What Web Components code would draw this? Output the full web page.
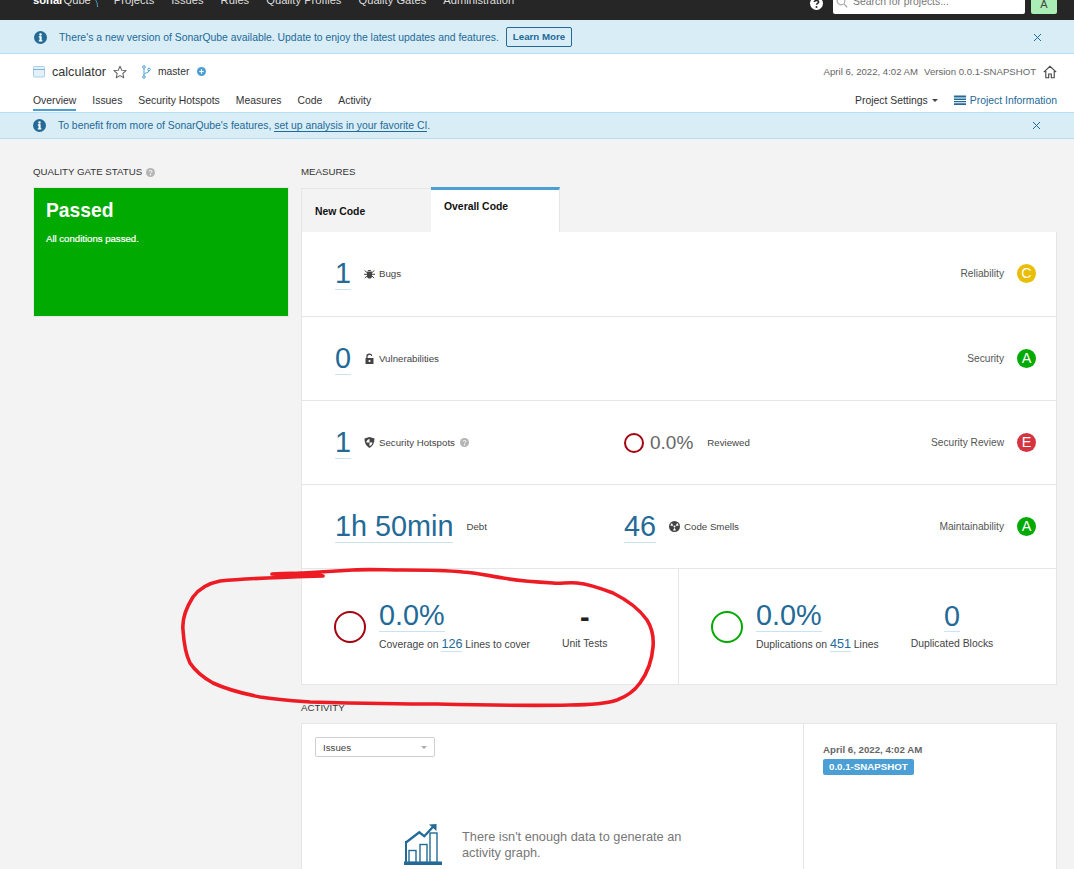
<!DOCTYPE html>
<html lang="en">
<head>
<meta charset="utf-8">
<title>calculator - SonarQube</title>
<style>
  html, body { margin: 0; height: 869px; overflow: hidden; }
  body { background: #f3f3f3; font-family: "Liberation Sans", Arial, sans-serif; color: #333; }
</style>
</head>
<body>
<sq-app></sq-app>

<script>
const ICONS = {
  info: '<svg width="13" height="13" viewBox="0 0 16 16"><circle cx="8" cy="8" r="8" fill="#236a97"/><rect x="6.8" y="6.6" width="2.6" height="6" fill="#fff"/><rect x="5.8" y="6.6" width="3" height="1.3" fill="#fff"/><rect x="5.8" y="11.4" width="4.6" height="1.4" fill="#fff"/><circle cx="8" cy="4.2" r="1.5" fill="#fff"/></svg>',
  close: '<svg width="9" height="9" viewBox="0 0 9 9"><path d="M1 1l7 7M8 1L1 8" stroke="#236a97" stroke-width="1" fill="none"/></svg>',
  project: '<svg width="12" height="13" viewBox="0 0 12 13"><rect x=".5" y="1.5" width="11" height="10.5" rx="1" fill="#e4f0f8" stroke="#a9cfe6"/><path d="M.5 4.5h11" stroke="#7db5d8"/></svg>',
  star: '<svg width="14" height="14" viewBox="0 0 16 16"><path d="M8 1.4l2 4.5 4.9.5-3.7 3.3 1.1 4.8L8 12.1l-4.3 2.4 1.1-4.8L1.100 6.400l4.900-.5z" fill="none" stroke="#666" stroke-width="1.200" stroke-linejoin="round"/></svg>',
  branch: '<svg width="9" height="14" viewBox="0 0 9 14"><g fill="none" stroke="#4b9fd5" stroke-width="1"><circle cx="2" cy="2" r="1.300"/><circle cx="2" cy="12" r="1.300"/><circle cx="7" cy="4.500" r="1.300"/><path d="M2 3.300v7.400M7 5.800C7 8 2.500 7.500 2 9.500"/></g></svg>',
  plus: '<svg width="9" height="9" viewBox="0 0 9 9"><circle cx="4.500" cy="4.500" r="4.500" fill="#4b9fd5"/><path d="M2.300 4.500h4.400M4.500 2.300v4.400" stroke="#fff" stroke-width="1.200"/></svg>',
  home: '<svg width="14" height="14" viewBox="0 0 14 14"><path d="M.8 7.200L7 1.300l6.200 5.900M2.800 6v6.800h2.900V9h2.600v3.800h2.900V6" fill="none" stroke="#444" stroke-width="1.100"/></svg>',
  list: '<svg width="12" height="10" viewBox="0 0 12 10"><path d="M0 .5h12v2H0zM0 3.500h12v1.400H0zM0 5.900h12v1.400H0zM0 8.300h12V10H0z" fill="#236a97"/></svg>',
  help: '<svg width="9" height="9" viewBox="0 0 9 9"><circle cx="4.500" cy="4.500" r="4.500" fill="#b4b4b4"/><path d="M3 3.500C3 2.100 6 2.100 6 3.500 6 4.500 4.500 4.400 4.500 5.400" fill="none" stroke="#fff" stroke-width="1"/><circle cx="4.500" cy="6.800" r=".7" fill="#fff"/></svg>',
  helpDark: '<svg width="13" height="13" viewBox="0 0 9 9"><circle cx="4.500" cy="4.500" r="4.500" fill="#fff"/><path d="M3 3.500C3 2.100 6 2.100 6 3.500 6 4.500 4.500 4.400 4.500 5.400" fill="none" stroke="#262626" stroke-width="1.100"/><circle cx="4.500" cy="7" r=".7" fill="#262626"/></svg>',
  search: '<svg width="12" height="12" viewBox="0 0 12 12"><circle cx="5" cy="5" r="3.800" fill="none" stroke="#aaa" stroke-width="1.200"/><path d="M8 8l3.200 3.200" stroke="#aaa" stroke-width="1.400"/></svg>',
  bug: '<svg width="11" height="11" viewBox="0 0 11 11"><path d="M3.500 3.200C3.500 1.500 7.500 1.500 7.500 3.200zM3 3.800h5v4.400c0 1.500-1.200 2.400-2.500 2.400S3 9.700 3 8.200z" fill="#444"/><path d="M.6 2.500l2.400 2M10.400 2.500L8 4.500M0 6.300h3M11 6.300H8M.8 10l2.400-2M10.200 10L7.800 8" stroke="#444" stroke-width="1" fill="none"/></svg>',
  lock: '<svg width="11" height="11" viewBox="0 0 11 11"><path d="M3 5V3.200C3 .8 7.200.5 7.800 2.800" fill="none" stroke="#444" stroke-width="1.300"/><path d="M1.500 5h8v6h-8z" fill="#444"/><circle cx="5.500" cy="8" r="1.100" fill="#fff"/></svg>',
  shield: '<svg width="11" height="11" viewBox="0 0 11 11"><path d="M5.500 0L10.500 1.600C10.500 6 9 9.300 5.500 11 2 9.300.5 6 .5 1.600z" fill="#444"/><path d="M5.500 1.800V5.500H2.300C2.600 3.800 3.500 2.500 5.500 1.800zM5.500 5.500h3c-.3 1.800-1.200 3-3 3.800z" fill="#fff"/></svg>',
  smell: '<svg width="11" height="11" viewBox="0 0 11 11"><circle cx="5.500" cy="5.500" r="5.500" fill="#444"/><circle cx="5.500" cy="5.500" r="1" fill="#fff"/><path transform="rotate(180 5.500 5.500)" d="M5.500 4.200L4 1.700a4.200 4.200 0 0 1 3 0zM4.300 6.200L1.400 6.300a4.200 4.200 0 0 0 1.500 2.600zM6.700 6.200l2.900.1a4.200 4.200 0 0 1-1.500 2.600z" fill="#fff"/></svg>',
  chart: '<svg width="38" height="42" viewBox="0 0 38 42"><g fill="none" stroke="#236a97"><path d="M2 17v22" stroke-width="2"/><rect x="5" y="26.500" width="7" height="12" stroke-width="1.400"/><rect x="16" y="20.500" width="7" height="18" stroke-width="1.400"/><rect x="26" y="9" width="7" height="29.500" stroke-width="1.400"/><path d="M1.300 19L15.300 8.300l5 4L30 1.800" stroke-width="2.300"/></g><path d="M25 .5L32.500 0v7z" fill="#236a97"/><rect y="37.500" width="38" height="3.500" fill="#236a97"/></svg>'
};

class SqNav extends HTMLElement {
  constructor() {
    super();
    this.attachShadow({ mode: 'open' });
    const items = ['Projects', 'Issues', 'Rules', 'Quality Profiles', 'Quality Gates', 'Administration'];
    this.shadowRoot.innerHTML = `
      <style>
        :host { display: flex; height: 20px; background: #262626; padding: 0 17px 0 33px; box-sizing: border-box; overflow: hidden; align-items: flex-end; }
        .logo { font-size: 11.200px; line-height: 14px; color: #fff; margin: 0 0 13px 0; white-space: nowrap; }
        .logo b { font-weight: 700; }
        .logo span { color: #ddd; font-weight: 400; }
        .wave { display: block; margin: 0 16px 13px 3px; }
        nav { display: flex; gap: 17px; margin-bottom: 13px; }
        nav a { font-size: 11.200px; line-height: 14px; color: #ddd; white-space: nowrap; }
        .right { margin-left: auto; display: flex; align-items: flex-end; padding-bottom: 6px; }
        .help { display: flex; margin: 0 10px 4px 0; }
        .search { width: 192px; height: 22px; background: #fff; border-radius: 2px; box-sizing: border-box; padding: 0 3px 3px; display: flex; align-items: center; gap: 5px; font-size: 10.400px; color: #777; }
        .avatar { width: 26px; height: 24px; margin-left: 6px; background: #aaeeb6; border-radius: 2px; display: flex; justify-content: center; align-items: flex-end; padding-bottom: 4px; box-sizing: border-box; font-size: 11px; color: #444; }
      </style>
      <div class="logo"><b>sonar</b><span>Qube</span></div>
      <svg class="wave" width="4" height="8" viewBox="0 0 4 8"><path d="M3.500 8C3.500 5 3 2 .5 0" fill="none" stroke="#4b9fd5" stroke-width="1"/></svg>
      <nav>${items.map(i => `<a>${i}</a>`).join('')}</nav>
      <div class="right">
        <span class="help">${ICONS.helpDark}</span>
        <div class="search">${ICONS.search}<span>Search for projects...</span></div>
        <div class="avatar">A</div>
      </div>`;
  }
}

class SqBanner extends HTMLElement {
  constructor() {
    super();
    this.attachShadow({ mode: 'open' });
    this.shadowRoot.innerHTML = `
      <style>
        :host { display: flex; align-items: center; background: #d9edf7; border-bottom: 1px solid #b4dff4; padding: 0 32px 0 34px; box-sizing: border-box; font-size: 10.400px; color: #236a97; }
        .msg { margin-left: var(--msg-gap, 12px); display: flex; align-items: center; gap: 7px; }
        svg { display: block; }
        .x { margin-left: auto; display: flex; }
        ::slotted(a) { color: #236a97; border-bottom: 1px solid #236a97; }
      </style>
      ${ICONS.info}
      <div class="msg"><span><slot></slot></span><slot name="action"></slot></div>
      <span class="x">${ICONS.close}</span>`;
  }
}

class SqProjectBar extends HTMLElement {
  constructor() {
    super();
    this.attachShadow({ mode: 'open' });
    const tabs = ['Overview', 'Issues', 'Security Hotspots', 'Measures', 'Code', 'Activity'];
    this.shadowRoot.innerHTML = `
      <style>
        :host { display: block; height: 59px; background: #fff; border-bottom: 1px solid #b4dff4; box-sizing: border-box; padding: 0 17px 0 33px; color: #333; }
        svg { display: block; }
        .top { display: flex; align-items: center; height: 35px; }
        .name { font-size: 12.600px; margin-left: 7px; color: #333; }
        .star { margin-left: 7px; }
        .branch { margin-left: 15px; }
        .master { font-size: 10.300px; margin-left: 7px; color: #333; }
        .plus { margin-left: 8px; }
        .meta { margin-left: auto; font-size: 9.600px; color: #666; display: flex; align-items: center; gap: 6px; }
        .home { margin-left: 1px; }
        .bottom { display: flex; height: 23px; align-items: flex-start; }
        .tab { font-size: 10.400px; line-height: 13px; padding: 5px 0 2px; margin-right: 16px; color: #333; }
        .tab.on { border-bottom: 2px solid #4b9fd5; }
        .side { margin-left: auto; display: flex; align-items: center; height: 22px; font-size: 10.400px; }
        .caret { width: 0; height: 0; border: 3px solid transparent; border-top: 3.500px solid #444; border-bottom: 0; margin-left: 4px; }
        .info { display: flex; align-items: center; gap: 4px; color: #236a97; margin-left: 16px; }
      </style>
      <div class="top">
        ${ICONS.project}
        <span class="name">calculator</span>
        <span class="star">${ICONS.star}</span>
        <span class="branch">${ICONS.branch}</span>
        <span class="master">master</span>
        <span class="plus">${ICONS.plus}</span>
        <div class="meta"><span>April 6, 2022, 4:02 AM</span><span>Version 0.0.1-SNAPSHOT</span><span class="home">${ICONS.home}</span></div>
      </div>
      <div class="bottom">
        ${tabs.map((t, i) => `<a class="tab ${i === 0 ? 'on' : ''}">${t}</a>`).join('')}
        <div class="side">
          <span>Project Settings</span><span class="caret"></span>
          <span class="info">${ICONS.list}<span>Project Information</span></span>
        </div>
      </div>`;
  }
}

class SqGate extends HTMLElement {
  constructor() {
    super();
    this.attachShadow({ mode: 'open' });
    this.shadowRoot.innerHTML = `
      <style>
        :host { display: block; height: 130px; box-sizing: border-box; background: #00aa00; border: 1px solid #e6e6e6; color: #fff; padding: 13px 12px; }
        h2 { margin: 0; font-size: 19.300px; line-height: 20px; font-weight: 700; }
        p { margin: 12px 0 0; font-size: 9.600px; line-height: 12px; -webkit-text-stroke: .2px #fff; }
      </style>
      <h2>Passed</h2>
      <p>All conditions passed.</p>`;
  }
}

class SqRating extends HTMLElement {
  constructor() {
    super();
    this.attachShadow({ mode: 'open' });
    const colors = { A: '#00aa00', C: '#eabe06', E: '#d4333f' };
    const v = this.getAttribute('value');
    this.shadowRoot.innerHTML = `
      <style>
        :host { display: flex; width: 19px; height: 19px; border-radius: 50%; background: ${colors[v]}; color: #fff; font-size: 14.400px; justify-content: center; align-items: center; line-height: 19px; }
      </style>${v}`;
  }
}

class SqRing extends HTMLElement {
  constructor() {
    super();
    this.attachShadow({ mode: 'open' });
    this.shadowRoot.innerHTML = `
      <style>
        :host { display: block; flex: none; width: var(--size, 32px); height: var(--size, 32px); border: var(--ring-w, 2px) solid var(--ring, #a4030f); border-radius: 50%; box-sizing: border-box; }
      </style>`;
  }
}

class SqRow extends HTMLElement {
  constructor() {
    super();
    this.attachShadow({ mode: 'open' });
    this.shadowRoot.innerHTML = `
      <style>
        :host { display: flex; height: 84px; box-sizing: border-box; border-bottom: 1px solid #e6e6e6; align-items: center; padding: 0 20px 0 33px; font-size: 10.200px; color: #555; }
        .a { flex: 0 0 289px; display: flex; align-items: center; }
        .b { display: flex; align-items: center; }
        .c { margin-left: auto; display: flex; align-items: center; gap: 13px; }
      </style>
      <div class="a"><slot name="a"></slot></div>
      <div class="b"><slot name="b"></slot></div>
      <div class="c"><slot name="c"></slot></div>`;
  }
}

class SqMetric extends HTMLElement {
  constructor() {
    super();
    this.attachShadow({ mode: 'open' });
    const icon = ICONS[this.getAttribute('icon')];
    this.shadowRoot.innerHTML = `
      <style>
        :host { display: flex; align-items: center; font-size: 9.700px; color: #444; }
        .v { font-size: 28.800px; line-height: 32px; color: #236a97; border-bottom: 1px solid #cae3f2; }
        .l { display: flex; align-items: center; gap: 4px; margin-left: 13px; white-space: nowrap; }
        svg { display: block; }
      </style>
      <span class="v">${this.getAttribute('value')}</span>
      <span class="l">${icon || ''}<span><slot></slot></span></span>`;
  }
}

class SqMeasures extends HTMLElement {
  constructor() {
    super();
    this.attachShadow({ mode: 'open' });
    this.shadowRoot.innerHTML = `
      <style>
        :host { display: block; }
        .tabs { display: flex; height: 44px; }
        .tab { box-sizing: border-box; font-size: 10.400px; font-weight: 700; color: #111; }
        .new { width: 130px; background: #f3f3f3; border: 1px solid #e6e6e6; border-bottom: 0; border-right: 0; padding: 17px 0 0 13px; }
        .over { width: 129px; background: #fff; border-top: 3px solid #4b9fd5; border-right: 1px solid #e6e6e6; padding: 11px 0 0 13px; margin-top: -1px; height: 45px; }
        .card { background: #fff; border: 1px solid #e6e6e6; border-top: 0; }
        .bottom { display: flex; height: 115px; }
        .cell { display: flex; align-items: center; padding-left: 32px; font-size: 10.400px; color: #444; box-sizing: border-box; }
        .cell:first-child { flex: 0 0 376px; }
        .cell + .cell { flex: 1; border-left: 1px solid #e6e6e6; }
        .main { margin-left: 13px; padding-bottom: 2px; }
        .big { display: inline-block; font-size: 28.800px; line-height: 32px; color: #236a97; border-bottom: 1px solid #cae3f2; }
        .sub { margin-top: 4px; line-height: 16px; white-space: nowrap; }
        .n { font-size: 12.600px; color: #236a97; border-bottom: 1px solid #cae3f2; }
        .extra { margin-left: 32px; text-align: center; white-space: nowrap; }
        .extra .big { line-height: 30px; }
        .dash { font-size: 28.800px; line-height: 30px; font-weight: 700; color: #222; }
        .red { --ring: #a4030f; }
        .green { --ring: #00aa00; }
      </style>
      <div class="tabs">
        <div class="tab new">New Code</div>
        <div class="tab over">Overall Code</div>
      </div>
      <div class="card">
        <slot></slot>
        <div class="bottom">
          <div class="cell">
            <sq-ring class="red"></sq-ring>
            <div class="main">
              <span class="big">0.0%</span>
              <div class="sub">Coverage on <span class="n">126</span> Lines to cover</div>
            </div>
            <div class="extra"><div class="dash">-</div><div class="sub">Unit Tests</div></div>
          </div>
          <div class="cell">
            <sq-ring class="green"></sq-ring>
            <div class="main">
              <span class="big">0.0%</span>
              <div class="sub">Duplications on <span class="n">451</span> Lines</div>
            </div>
            <div class="extra"><span class="big">0</span><div class="sub">Duplicated Blocks</div></div>
          </div>
        </div>
      </div>`;
  }
}

class SqActivity extends HTMLElement {
  constructor() {
    super();
    this.attachShadow({ mode: 'open' });
    this.shadowRoot.innerHTML = `
      <style>
        :host { display: flex; height: 160px; background: #fff; border: 1px solid #e6e6e6; box-sizing: border-box; }
        .graph { width: 502px; box-sizing: border-box; padding: 13px 0 0 13px; border-right: 1px solid #e6e6e6; }
        .select { width: 120px; height: 20px; box-sizing: border-box; border: 1px solid #cfcfcf; border-radius: 2px; display: flex; align-items: center; justify-content: space-between; padding: 0 7px; font-size: 9.700px; color: #444; }
        .select i { width: 0; height: 0; border: 3px solid transparent; border-top: 3.500px solid #aaa; border-bottom: 0; }
        .empty { display: flex; gap: 20px; margin: 67px 0 0 89px; font-size: 12.750px; line-height: 16px; color: #777; }
        .empty p { margin: 5px 0 0; width: 240px; }
        .side { padding: 20px 0 0 19px; }
        .date { font-size: 9.700px; line-height: 12px; font-weight: 700; color: #666; }
        .badge { display: inline-block; margin-top: 3px; height: 16px; line-height: 16px; padding: 0 6px; background: #4b9fd5; border-radius: 2px; color: #fff; font-size: 9.700px; font-weight: 700; }
      </style>
      <div class="graph">
        <div class="select"><span>Issues</span><i></i></div>
        <div class="empty">${ICONS.chart}<p>There isn't enough data to generate an activity graph.</p></div>
      </div>
      <div class="side">
        <div class="date">April 6, 2022, 4:02 AM</div>
        <span class="badge">0.0.1-SNAPSHOT</span>
      </div>`;
  }
}

class SqReview extends HTMLElement {
  constructor() {
    super();
    this.attachShadow({ mode: 'open' });
    this.shadowRoot.innerHTML = `
      <style>
        :host { display: flex; align-items: center; font-size: 9.700px; color: #444; --size: 20px; --ring-w: 2.500px; }
        .pct { font-size: 19px; color: #666; margin-left: 6px; }
        .l { margin-left: 14px; }
      </style>
      <sq-ring></sq-ring><span class="pct">0.0%</span><span class="l">Reviewed</span>`;
  }
}

class SqApp extends HTMLElement {
  constructor() {
    super();
    this.attachShadow({ mode: 'open' });
    this.shadowRoot.innerHTML = `
      <style>
        :host { display: block; position: relative; height: 869px; overflow: hidden; }
        .banner1 { height: 34px; padding-top: 1px; }
        .banner2 { height: 26px; padding-left: 33px; padding-right: 33px; }
        .layout { display: grid; grid-template-columns: 256px 756px; column-gap: 12px; padding: 27px 0 0 33px; }
        h3 { margin: 0 0 10px; font-size: 9.700px; line-height: 12px; font-weight: 400; color: #333; text-transform: uppercase; display: flex; align-items: center; gap: 4px; white-space: nowrap; }
        .gate-title { margin-bottom: 9px; }
        .activity { margin: 17px 0 9px; }
        .first { height: 85px; padding-bottom: 1px; }
        .hint { margin-left: 5px; vertical-align: -1px; }
        .btn { display: inline-block; border: 1px solid #236a97; border-radius: 2px; padding: 0 6px; height: 18px; line-height: 18px; font-weight: 700; font-size: 9.700px; color: #236a97; }
        .ink { position: absolute; left: 0; top: 0; pointer-events: none; }
      </style>
      <sq-nav></sq-nav>
      <sq-banner class="banner1">There's a new version of SonarQube available. Update to enjoy the latest updates and features.<span slot="action" class="btn">Learn More</span></sq-banner>
      <sq-project-bar></sq-project-bar>
      <sq-banner class="banner2">To benefit from more of SonarQube's features, <a>set up analysis in your favorite CI</a>.</sq-banner>
      <div class="layout">
        <div>
          <h3 class="gate-title">Quality Gate Status ${ICONS.help}</h3>
          <sq-gate></sq-gate>
        </div>
        <div>
          <h3>Measures</h3>
          <sq-measures>
            <sq-row class="first">
              <sq-metric slot="a" value="1" icon="bug">Bugs</sq-metric>
              <span slot="c">Reliability</span><sq-rating slot="c" value="C"></sq-rating>
            </sq-row>
            <sq-row>
              <sq-metric slot="a" value="0" icon="lock">Vulnerabilities</sq-metric>
              <span slot="c">Security</span><sq-rating slot="c" value="A"></sq-rating>
            </sq-row>
            <sq-row>
              <sq-metric slot="a" value="1" icon="shield">Security Hotspots<span class="hint">${ICONS.help}</span></sq-metric>
              <sq-review slot="b"></sq-review>
              <span slot="c">Security Review</span><sq-rating slot="c" value="E"></sq-rating>
            </sq-row>
            <sq-row>
              <sq-metric slot="a" value="1h 50min">Debt</sq-metric>
              <sq-metric slot="b" value="46" icon="smell">Code Smells</sq-metric>
              <span slot="c">Maintainability</span><sq-rating slot="c" value="A"></sq-rating>
            </sq-row>
          </sq-measures>
          <h3 class="activity">Activity</h3>
          <sq-activity></sq-activity>
        </div>
      </div>
      <svg class="ink" width="1074" height="869" viewBox="0 0 1074 869" fill="none">
        <path d="M272 574C290 573 310 573 323 576C290 577 250 578 220 581C205 584 198 590 193 597C186 608 182 620 183 630C184 645 186 655 190 663C196 672 204 678 213 683C228 690 245 694 260 697C278 700 295 701 310 702C350 703 395 704 437 704C480 705 530 706 570 705C590 705 605 704 617 700C628 696 635 690 640 683C648 672 652 660 653 647C654 636 652 628 647 620C640 610 627 600 613 593C600 588 588 584 577 583C568 582 560 584 553 583C535 582 520 581 503 578C490 576 478 573 463 572C443 570 423 570 403 570C385 570 368 569 353 570C336 571 320 572 303 573C292 574 282 575 272 574Z" stroke="#ed1c24" stroke-width="3.600" stroke-linejoin="round"/>
      </svg>`;
  }
}

customElements.define('sq-nav', SqNav);
customElements.define('sq-banner', SqBanner);
customElements.define('sq-project-bar', SqProjectBar);
customElements.define('sq-gate', SqGate);
customElements.define('sq-rating', SqRating);
customElements.define('sq-ring', SqRing);
customElements.define('sq-row', SqRow);
customElements.define('sq-metric', SqMetric);
customElements.define('sq-review', SqReview);
customElements.define('sq-measures', SqMeasures);
customElements.define('sq-activity', SqActivity);
customElements.define('sq-app', SqApp);
</script>
</body>
</html>
